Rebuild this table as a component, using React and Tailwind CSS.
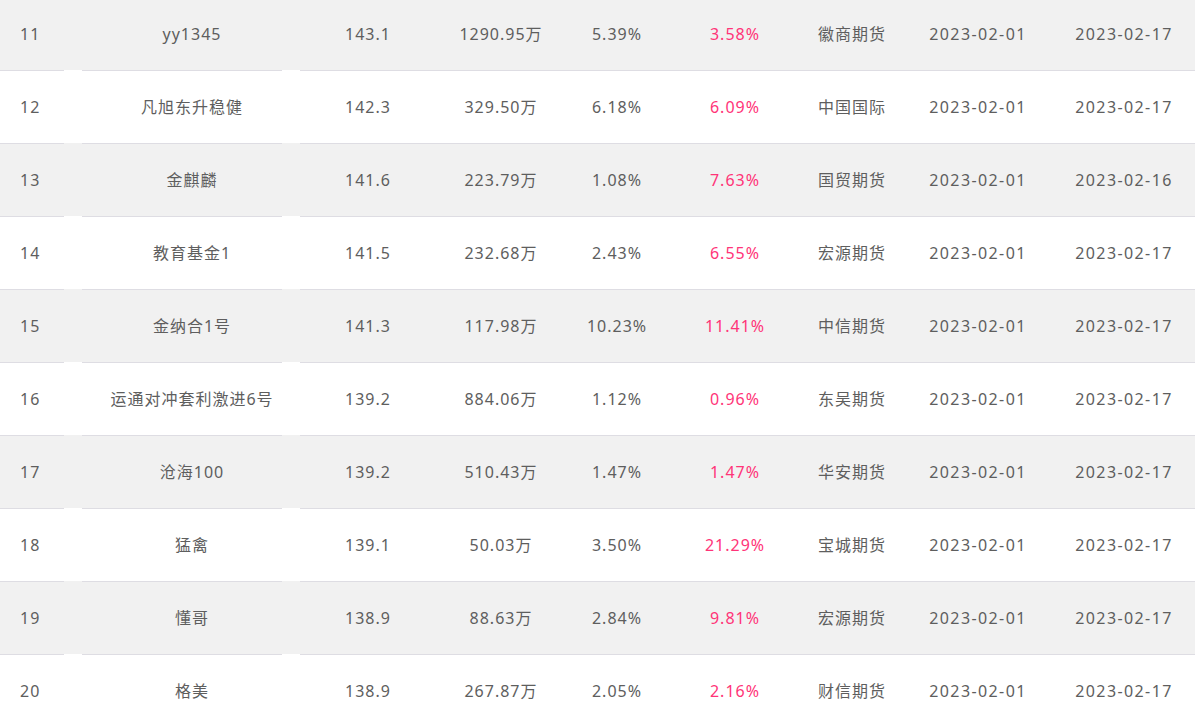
import React from 'react';

const rows = [
  { rank: 11, name: 'yy1345', score: '143.1', amount: '1290.95万', ret: '5.39%', draw: '3.58%', broker: '徽商期货', start: '2023-02-01', end: '2023-02-17' },
  { rank: 12, name: '凡旭东升稳健', score: '142.3', amount: '329.50万', ret: '6.18%', draw: '6.09%', broker: '中国国际', start: '2023-02-01', end: '2023-02-17' },
  { rank: 13, name: '金麒麟', score: '141.6', amount: '223.79万', ret: '1.08%', draw: '7.63%', broker: '国贸期货', start: '2023-02-01', end: '2023-02-16' },
  { rank: 14, name: '教育基金1', score: '141.5', amount: '232.68万', ret: '2.43%', draw: '6.55%', broker: '宏源期货', start: '2023-02-01', end: '2023-02-17' },
  { rank: 15, name: '金纳合1号', score: '141.3', amount: '117.98万', ret: '10.23%', draw: '11.41%', broker: '中信期货', start: '2023-02-01', end: '2023-02-17' },
  { rank: 16, name: '运通对冲套利激进6号', score: '139.2', amount: '884.06万', ret: '1.12%', draw: '0.96%', broker: '东吴期货', start: '2023-02-01', end: '2023-02-17' },
  { rank: 17, name: '沧海100', score: '139.2', amount: '510.43万', ret: '1.47%', draw: '1.47%', broker: '华安期货', start: '2023-02-01', end: '2023-02-17' },
  { rank: 18, name: '猛禽', score: '139.1', amount: '50.03万', ret: '3.50%', draw: '21.29%', broker: '宝城期货', start: '2023-02-01', end: '2023-02-17' },
  { rank: 19, name: '懂哥', score: '138.9', amount: '88.63万', ret: '2.84%', draw: '9.81%', broker: '宏源期货', start: '2023-02-01', end: '2023-02-17' },
  { rank: 20, name: '格美', score: '138.9', amount: '267.87万', ret: '2.05%', draw: '2.16%', broker: '财信期货', start: '2023-02-01', end: '2023-02-17' },
];

const Cell = ({ className = '', children }) => (
  <div className={`flex shrink-0 items-center justify-center whitespace-nowrap ${className}`}>{children}</div>
);

const RankRow = ({ row, striped }) => (
  <div className={striped ? 'bg-[#f1f1f1]' : 'bg-white'}>
    {/* row rule, broken under the name column like the original table */}
    <div className="flex h-px">
      <div className="w-[64px] bg-[#dedde3]" />
      <div className="w-[18px]" />
      <div className="w-[200px] bg-[#dedde3]" />
      <div className="w-[18px]" />
      <div className="flex-1 bg-[#dedde3]" />
    </div>
    <div className="flex h-[72px] items-center">
      <div className="w-[64px] shrink-0 pl-[20px]">{row.rank}</div>
      <Cell className="w-[256px]">{row.name}</Cell>
      <Cell className="w-[96px]">{row.score}</Cell>
      <Cell className="w-[170px]">{row.amount}</Cell>
      <Cell className="w-[62px]">{row.ret}</Cell>
      <Cell className="w-[174px] text-[#ff3478]">{row.draw}</Cell>
      <Cell className="w-[60px]">{row.broker}</Cell>
      <Cell className="w-[192px] tracking-[1.4px]">{row.start}</Cell>
      <Cell className="w-[100px] tracking-[1.4px]">{row.end}</Cell>
    </div>
  </div>
);

export default function App() {
  return (
    <div className="h-[723px] w-[1195px] overflow-hidden bg-white">
      <div className="-mt-[3px] text-[16px] tracking-[1px] text-[#5e5e5e] [font-family:'Noto_Sans','Noto_Sans_CJK_SC',sans-serif]">
        {rows.map((row, i) => (
          <RankRow key={row.rank} row={row} striped={i % 2 === 0} />
        ))}
      </div>
    </div>
  );
}
